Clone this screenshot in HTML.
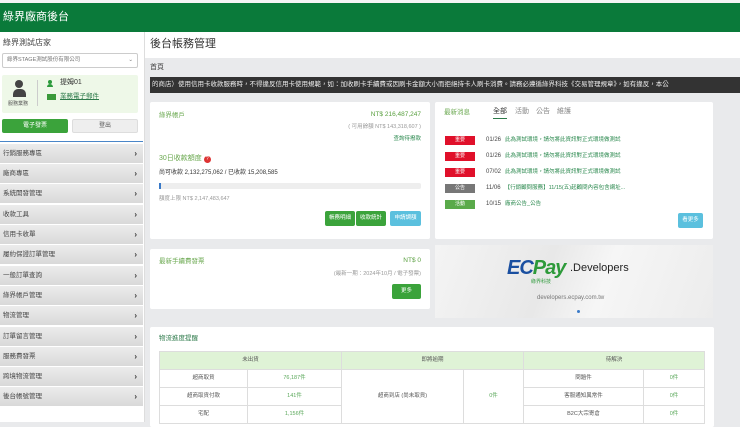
<!DOCTYPE html>
<html><head><meta charset="utf-8"><style>
*{margin:0;padding:0;box-sizing:border-box}
body{width:740px;height:422px;overflow:hidden;background:#e9eaec;font-family:"Liberation Sans","Noto Sans CJK TC",sans-serif;position:relative;font-size:7px;color:#333;line-height:1.2}
.abs{position:absolute}
.hdr{left:0;top:0;width:740px;height:32px;background:#0a7a3a;border-top:3px solid #f4f4f4}
.hdr span{position:absolute;left:3px;top:8px;color:#fff;font-size:11px}
.side{left:0;top:32px;width:145px;height:390px;background:#fff;border-right:1px solid #ddd}
.menu{position:absolute;left:0;width:143px;height:20px;background:linear-gradient(#ececec,#d9d9d9);border-bottom:1px solid #fff;font-size:6.5px;color:#444;padding:0 0 0 3px;line-height:20px}
.menu b{position:absolute;right:6px;top:0;font-size:8px;color:#333;line-height:20px}
.card{background:#fff;border-radius:2px}
.btn{position:absolute;color:#fff;font-size:5.5px;text-align:center;border-radius:2px}
.tag{position:absolute;left:10px;width:30px;height:9px;color:#fff;font-size:5px;text-align:center;line-height:9px}
.nrow{position:absolute;left:51px;font-size:6px;color:#444;line-height:9px}
.nrow span{color:#2d8a50;font-size:5.5px;margin-left:4px}
table{border-collapse:collapse;position:absolute;left:9px;top:24px;width:546px;font-size:5.5px;text-align:center}
td,th{border:1px solid #ddd;height:18px;font-weight:normal;color:#555}
th{background:#dff3d6}
.g{color:#5aa85a}
</style></head><body>
<div class="abs hdr"><span>綠界廠商後台</span></div>
<div class="abs side">
 <div class="abs" style="left:3px;top:6px;font-size:8px;color:#444">綠界測試店家</div>
 <div class="abs" style="left:2px;top:21px;width:136px;height:15px;border:1px solid #ccc;border-radius:2px;font-size:5.5px;color:#777;padding:0 4px;line-height:13px">綠界STAGE測試股份有限公司<span style="position:absolute;right:4px;top:0">⌄</span></div>
 <div class="abs" style="left:2px;top:43px;width:136px;height:38px;background:#eef8e8;border-radius:2px">
  <div class="abs" style="left:13px;top:5px;width:8px;height:8px;border-radius:50%;background:#444"></div>
  <div class="abs" style="left:11px;top:14px;width:13px;height:8px;border-radius:5px 5px 0 0;background:#444"></div>
  <div class="abs" style="left:6px;top:26px;font-size:5px;color:#555">服務業務</div>
  <div class="abs" style="left:35px;top:5px;width:1px;height:26px;background:#ccc"></div>
  <div class="abs" style="left:46px;top:5px;width:4px;height:4px;border-radius:50%;background:#2a9a3a"></div>
  <div class="abs" style="left:45px;top:9px;width:6px;height:3px;border-radius:3px 3px 0 0;background:#2a9a3a"></div>
  <div class="abs" style="left:58px;top:4px;font-size:7px">提姆01</div>
  <div class="abs" style="left:45px;top:19px;width:9px;height:6px;background:#3a9a3a"></div>
  <div class="abs" style="left:58px;top:18px;font-size:6.5px;color:#2d7a4a;text-decoration:underline">業務電子郵件</div>
 </div>
 <div class="abs" style="left:2px;top:87px;width:66px;height:14px;background:#3ba33b;border-radius:2px;color:#fff;font-size:6px;text-align:center;line-height:14px">電子發票</div>
 <div class="abs" style="left:72px;top:87px;width:66px;height:14px;background:#eee;border:1px solid #ddd;border-radius:2px;color:#555;font-size:6px;text-align:center;line-height:12px">登出</div>
 <div class="abs" style="left:0;top:109px;width:143px;height:1px;background:#4a86c8"></div>
 <div class="menu" style="top:112px">行銷服務專區<b>›</b></div>
 <div class="menu" style="top:132px">廠商專區<b>›</b></div>
 <div class="menu" style="top:152px">系統開發管理<b>›</b></div>
 <div class="menu" style="top:173px">收款工具<b>›</b></div>
 <div class="menu" style="top:193px">信用卡收單<b>›</b></div>
 <div class="menu" style="top:213px">履約保證訂單管理<b>›</b></div>
 <div class="menu" style="top:234px">一般訂單查詢<b>›</b></div>
 <div class="menu" style="top:254px">綠界帳戶管理<b>›</b></div>
 <div class="menu" style="top:274px">物流管理<b>›</b></div>
 <div class="menu" style="top:295px">訂單留言管理<b>›</b></div>
 <div class="menu" style="top:315px">服務費發票<b>›</b></div>
 <div class="menu" style="top:335px">跨境物流管理<b>›</b></div>
 <div class="menu" style="top:355px">後台帳號管理<b>›</b></div>
</div>
<div class="abs" style="left:145px;top:32px;width:595px;height:26px;background:#fff"><span style="position:absolute;left:5px;top:6px;font-size:11px;color:#333">後台帳務管理</span></div>
<div class="abs" style="left:150px;top:64px;font-size:7px;color:#444">首頁</div>
<div class="abs" style="left:150px;top:77px;width:590px;height:16px;background:#333;color:#eee;font-size:6.5px;padding:0 2px;line-height:16px;white-space:nowrap;overflow:hidden">的商店）使用信用卡收款服務時，不得違反信用卡使用規範，如：加收刷卡手續費或因刷卡金額大小而拒絕持卡人刷卡消費。請務必遵循綠界科技《交易管理規章》，如有違反，本公</div>

<div class="abs card" style="left:150px;top:102px;width:280px;height:137px">
 <div class="abs" style="left:9px;top:10px;font-size:6.5px;color:#6aa84f">綠界帳戶</div>
 <div class="abs" style="right:9px;top:9px;font-size:6.5px;color:#5aa040">NT$ 216,487,247</div>
 <div class="abs" style="right:9px;top:22px;font-size:5.5px;color:#999">( 可用餘額 NT$ 143,318,607 )</div>
 <div class="abs" style="right:9px;top:34px;font-size:5.5px;color:#2d8a50">查詢待撥款</div>
 <div class="abs" style="left:9px;top:53px;font-size:7px;color:#6aa84f">30日收款額度 <span style="display:inline-block;width:7px;height:7px;border-radius:50%;background:#d33;color:#fff;font-size:5px;text-align:center;line-height:7px">?</span></div>
 <div class="abs" style="left:9px;top:68px;font-size:6px;color:#333">尚可收款 2,132,275,062 / 已收款 15,208,585</div>
 <div class="abs" style="left:9px;top:81px;width:262px;height:6px;background:#eee;border-radius:2px"><div style="width:2px;height:6px;background:#3a7ac8"></div></div>
 <div class="abs" style="left:9px;top:94px;font-size:5.5px;color:#999">額度上限 NT$ 2,147,483,647</div>
 <div class="btn" style="left:175px;top:109px;width:30px;height:15px;line-height:15px;background:#3ba33b">帳務明細</div>
 <div class="btn" style="left:206px;top:109px;width:30px;height:15px;line-height:15px;background:#3ba33b">收款統計</div>
 <div class="btn" style="left:240px;top:109px;width:31px;height:15px;line-height:15px;background:#5bc0de">申請調額</div>
</div>

<div class="abs card" style="left:435px;top:102px;width:278px;height:137px">
 <div class="abs" style="left:9px;top:7px;font-size:6.5px;color:#6aa84f">最新消息</div>
 <div class="abs" style="left:58px;top:6px;font-size:7px;color:#333;border-bottom:1px solid #2d7a4a;padding-bottom:2px">全部</div>
 <div class="abs" style="left:80px;top:6px;font-size:7px;color:#888">活動</div>
 <div class="abs" style="left:101px;top:6px;font-size:7px;color:#888">公告</div>
 <div class="abs" style="left:122px;top:6px;font-size:7px;color:#888">維護</div>
 <div class="tag" style="top:34px;background:#e0102a">重要</div><div class="nrow" style="top:34px">01/26<span>此為測試環境，請勿將此資訊對正式環境做測試</span></div>
 <div class="tag" style="top:50px;background:#e0102a">重要</div><div class="nrow" style="top:50px">01/26<span>此為測試環境，請勿將此資訊對正式環境做測試</span></div>
 <div class="tag" style="top:66px;background:#e0102a">重要</div><div class="nrow" style="top:66px">07/02<span>此為測試環境，請勿將此資訊對正式環境做測試</span></div>
 <div class="tag" style="top:82px;background:#777">公告</div><div class="nrow" style="top:82px">11/06<span>【行銷顧問服務】11/15(五)起顧問內容包含網址...</span></div>
 <div class="tag" style="top:98px;background:#5aaa4a">活動</div><div class="nrow" style="top:98px">10/15<span>廠商公告_公告</span></div>
 <div class="btn" style="left:243px;top:111px;width:25px;height:15px;line-height:15px;background:#5bc0de">看更多</div>
</div>

<div class="abs card" style="left:150px;top:249px;width:280px;height:60px">
 <div class="abs" style="left:9px;top:9px;font-size:6.5px;color:#6aa84f">最新手續費發票</div>
 <div class="abs" style="right:9px;top:8px;font-size:6.5px;color:#5aa040">NT$ 0</div>
 <div class="abs" style="right:9px;top:22px;font-size:5.5px;color:#999">(最新一期：2024年10月 / 電子發票)</div>
 <div class="btn" style="left:242px;top:35px;width:29px;height:15px;line-height:15px;background:#3ba33b">更多</div>
</div>

<div class="abs" style="left:435px;top:245px;width:278px;height:73px;background:linear-gradient(110deg,#f4f4f4,#e8e8e8 40%,#f6f6f6 60%,#ececec)">
 <div class="abs" style="left:72px;top:11px;font-size:20px;font-weight:bold;font-style:italic;color:#1a4fa0;letter-spacing:-1px">EC<span style="color:#2d9a3a">Pay</span></div>
 <div class="abs" style="left:96px;top:34px;font-size:5px;color:#2d9a3a">綠界科技</div>
 <div class="abs" style="left:135px;top:17px;font-size:11px;color:#222">.Developers</div>
 <div class="abs" style="left:102px;top:50px;font-size:6px;color:#777">developers.ecpay.com.tw</div>
 <div class="abs" style="left:142px;top:65px;width:3px;height:3px;border-radius:50%;background:#3a7ac8"></div>
</div>

<div class="abs card" style="left:150px;top:327px;width:564px;height:100px">
 <div class="abs" style="left:9px;top:8px;font-size:6.5px;color:#2d7a4a">物流進度提醒</div>
 <table>
  <tr><th colspan="2">未出貨</th><th colspan="2">即將逾期</th><th colspan="2">待解決</th></tr>
  <tr><td style="width:88px">超商取貨</td><td class="g" style="width:94px">76,187件</td><td rowspan="3" style="width:122px">超商到店 (尚未取貨)</td><td rowspan="3" class="g" style="width:60px">0件</td><td style="width:120px">問題件</td><td class="g">0件</td></tr>
  <tr><td>超商取貨付款</td><td class="g">141件</td><td>客服通知異常件</td><td class="g">0件</td></tr>
  <tr><td>宅配</td><td class="g">1,156件</td><td>B2C大宗寄倉</td><td class="g">0件</td></tr>
 </table>
</div>
</body></html>
